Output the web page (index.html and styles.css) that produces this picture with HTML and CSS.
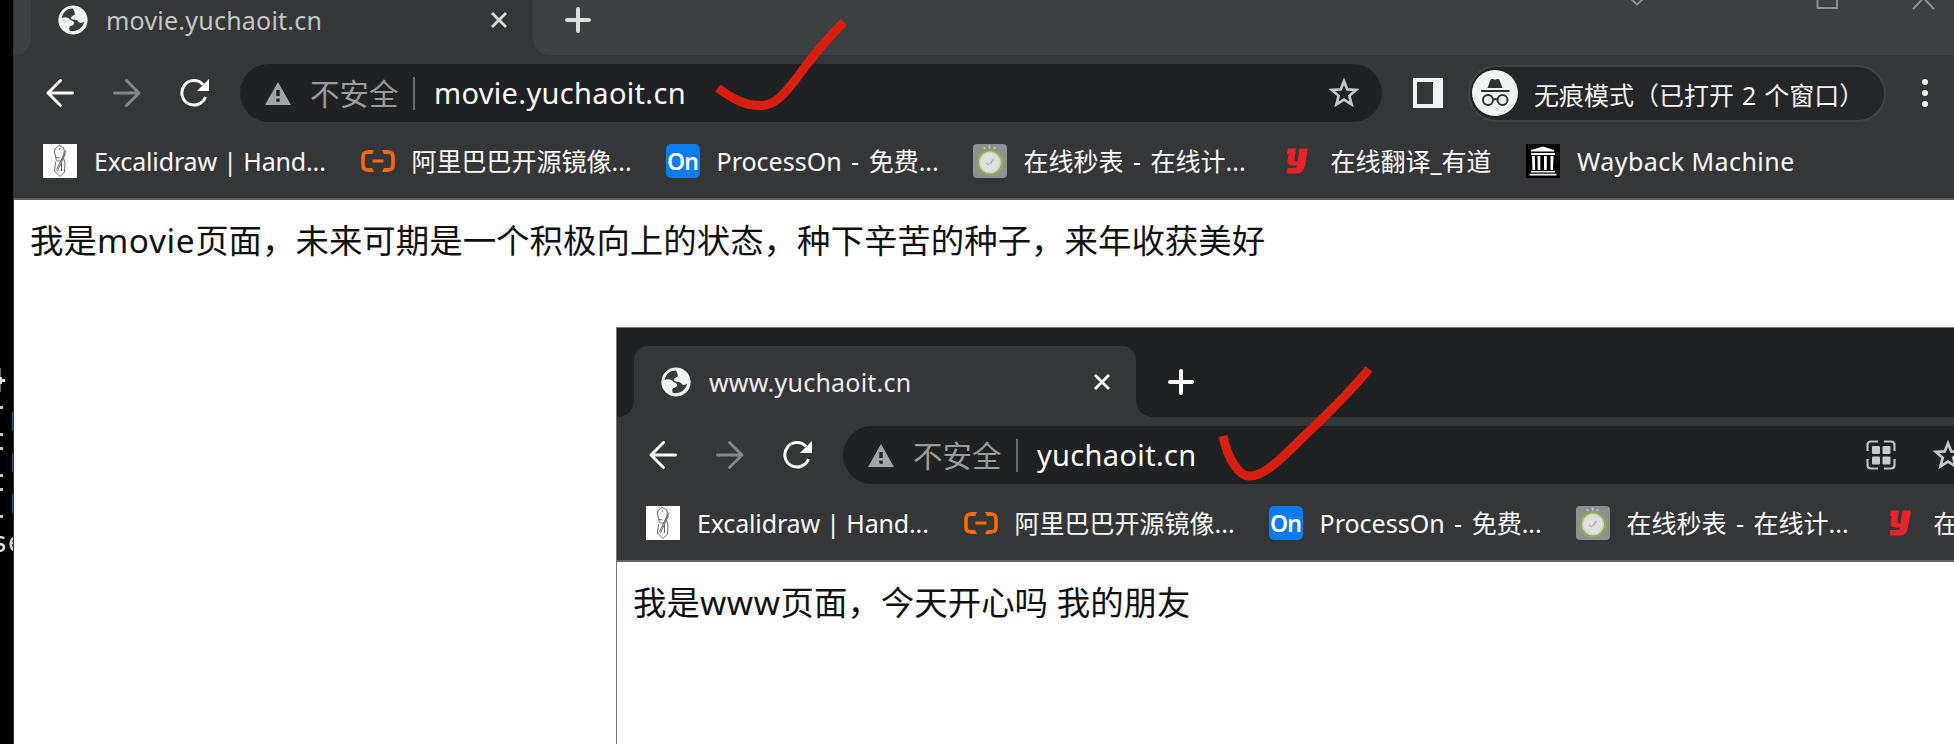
FILE: index.html
```html
<!DOCTYPE html>
<html lang="zh-CN">
<head>
<meta charset="utf-8">
<title>yuchaoit.cn</title>
<link rel="stylesheet" href="styles.css">
</head>
<body>
<svg class="defs" aria-hidden="true">
  <symbol id="globe" viewBox="0 0 30 30"><circle cx="15" cy="15" r="14.6" fill="#f1f3f4"/><path d="M15 3.500C9 3 4.500 7.500 3.800 13c2.200-1 5-.8 7.200 0.500 1.200 1.800 3.800 2.200 5 3.500 0.800 2-1 3.500-3.500 4-1.500 0.600-1.500 3-0.800 4.800 6 1.500 13-2 14.500-9-3 2-5.500 1-6.500-1-1.500-1.500-5-0.500-6.500-2-0.500-2 0.800-3.200 2.800-3.600 1.600-1 0.500-3.500-1-6.700z" fill="#3a3b3d"/></symbol>
  <symbol id="close" viewBox="0 0 18 18"><path d="M2 2l14 14M16 2L2 16" stroke="currentColor" stroke-width="2.800" fill="none"/></symbol>
  <symbol id="plus" viewBox="0 0 26 26"><path d="M13 2v22M2 13h22" stroke="currentColor" stroke-width="4" stroke-linecap="round"/></symbol>
  <symbol id="arrow" viewBox="0 0 28 28"><path d="M26.500 14H2M14.500 1.500L2 14l12.500 12.500" stroke="currentColor" stroke-width="2.900" stroke-linecap="round" stroke-linejoin="round" fill="none"/></symbol>
  <symbol id="reload" viewBox="0 0 29 28"><path d="M25.500 18A12.200 12.200 0 1 1 23 5.500" stroke="#fff" stroke-width="3" fill="none"/><path d="M29 0v12H17z" fill="#fff"/></symbol>
  <symbol id="warn" viewBox="0 0 26 23"><path d="M13 0l13 23H0z" fill="#a2a5a8"/><path d="M13 8v6M13 16.500v3.200" stroke="#202124" stroke-width="3.400"/></symbol>
  <symbol id="star" viewBox="0 0 30 30"><path d="M15 3.200l3.300 8.200 8.800.6-6.800 5.700 2.200 8.600-7.500-4.800-7.500 4.800 2.200-8.600L2.900 12l8.800-.6z" stroke="#c6c8ca" stroke-width="2.700" fill="none"/></symbol>
  <symbol id="qr" viewBox="0 0 30 30"><path d="M1.500 11V5q0-3.500 3.500-3.500h7M18 1.500h7q3.500 0 3.500 3.500v6M28.500 19v6q0 3.500-3.500 3.500h-7M12 28.500H5q-3.500 0-3.500-3.500v-6" fill="none" stroke="#bfc1c3" stroke-width="2.200"/><g fill="#c9cacc"><rect x="6" y="6" width="8" height="8" rx="1"/><rect x="16.500" y="6" width="8" height="8" rx="1"/><rect x="6" y="16.500" width="8" height="8" rx="1"/><rect x="16.500" y="16.500" width="8" height="8" rx="1"/></g></symbol>
  <symbol id="pen" viewBox="0 0 34 34"><path d="M0 0h34v34H0z" fill="#fff"/><path d="M16 1.500l-4 3.500-.5 3 1.800 8 1 1h3.500l3-6.500.5-4.500-1-2.500zM13 13.500l3.500.5M23 6.500l-9.500 19M22.500 9.500l-8 17.500M18.500 19v8M12.500 18l-1 9 5.500 5.500 4.500-4.500.5-9-1.500-5" fill="none" stroke="#666" stroke-width="1"/><circle cx="16.500" cy="5" r=".8" fill="#555"/></symbol>
  <symbol id="ali" viewBox="0 0 34 22"><path d="M11.500 2H7Q2 2 2 7v8q0 5 5 5h4.500M22.500 2H27q5 0 5 5v8q0 5-5 5h-4.500" fill="none" stroke="#ff6a00" stroke-width="3.600"/><path d="M7 0h6l-2.500 4H6zM27 0h-6l2.500 4H28zM7 22h6l-2.500-4H6zM27 22h-6l2.500-4H28zM11.500 9.500h11v3h-11z" fill="#ff6a00"/></symbol>
  <symbol id="watch" viewBox="0 0 34 34"><rect width="34" height="34" rx="4" fill="#8e918f"/><path d="M11 3l1 2M16.500 1.500v3M22 3l-1 2" stroke="#c5c9c5" stroke-width="1.600"/><circle cx="17" cy="18.500" r="12" fill="#cfd1cf" stroke="#93ad4c" stroke-width="2.200"/><circle cx="17" cy="18.500" r="9.500" fill="#e0e0e0"/><path d="M17 20l3.500-5M16 21l-3-2" stroke="#b5b5b5" stroke-width="1.500"/></symbol>
  <symbol id="youdao" viewBox="0 0 34 34"><path d="M8 4.500h8l-1.500 11q-.2 2 1.500 2h1.500l2-13H28l-3 17q-1.500 8-8.500 8H6.500l1-5.500h7q2.500 0 3-2.500h-5q-5.500 0-5-5L8.500 10H7z" fill="#e8232a"/></symbol>
  <symbol id="wayback" viewBox="0 0 34 34"><path d="M0 0h34v34H0z" fill="#000"/><path d="M17 2.500L28 6v1.500H5V6zM5 9h24v2H5zM5 27h24v1.500H5zM3.500 29.800h27V31.500h-27zM6 12h2.800l.4 14H6.500zM11.500 12h2.800v14h-2.600zM18 12h2.800v14H18zM24.500 12h3l-.5 14h-2.500z" fill="#fff"/></symbol>
  <symbol id="spy" viewBox="0 0 46 46"><circle cx="23" cy="23" r="23" fill="#f1f3f4"/><path d="M15.500 18l3-8q.5-1.500 2-1l2.500.8 2.500-.8q1.500-.5 2 1l3 8zM9 20h28.500v1.900H9z" fill="#303134"/><g fill="none" stroke="#303134" stroke-width="2"><circle cx="16" cy="30" r="5"/><circle cx="30.500" cy="30" r="5"/><path d="M21 30q2.200-2 4.500 0"/></g></symbol>
</svg>

<div class="terminal"><i class="gold"></i><b class="cross"></b>
  <div class="dashes"><i></i><i></i><i></i><i></i><i></i><i></i></div>
  <div class="marks"><i></i><i></i><i></i></div>
  <span class="term-text">se</span>
</div>

<section class="window back">
  <header class="titlebar">
    <div class="tab"><svg class="globe"><use href="#globe"/></svg><span class="tab-title">movie.yuchaoit.cn</span><svg class="close"><use href="#close"/></svg></div>
    <svg class="plus"><use href="#plus"/></svg>
    <svg class="caption" viewBox="0 0 300 10"><path d="M-6 -2l7 6.500 7-6.500M181.500 -8h19.500V8h-19.500zM277 9l10.500-11 10.500 11" fill="none" stroke="#8f9293" stroke-width="1.900"/></svg>
  </header>
  <nav class="toolbar">
    <svg class="nav"><use href="#arrow"/></svg><svg class="nav next"><use href="#arrow"/></svg><svg class="reload"><use href="#reload"/></svg>
    <div class="omnibox"><svg class="warn"><use href="#warn"/></svg><span class="unsafe">不安全</span><i class="sep"></i><span class="url">movie.yuchaoit.cn</span><svg class="star"><use href="#star"/></svg></div>
    <i class="panel"></i>
    <div class="incognito"><svg class="spy"><use href="#spy"/></svg><span>无痕模式（已打开 2 个窗口）</span></div>
    <div class="menu"><i></i><i></i><i></i></div>
  </nav>
  <div class="bookmarks">
    <a><svg class="fav"><use href="#pen"/></svg><span class="latin">Excalidraw | Hand...</span></a>
    <a><svg class="fav ali"><use href="#ali"/></svg><span>阿里巴巴开源镜像...</span></a>
    <a><b class="on">On</b><span class="spaced">ProcessOn - 免费...</span></a>
    <a><svg class="fav"><use href="#watch"/></svg><span class="spaced">在线秒表 - 在线计...</span></a>
    <a><svg class="fav"><use href="#youdao"/></svg><span>在线翻译_有道</span></a>
    <a><svg class="fav"><use href="#wayback"/></svg><span class="wb">Wayback Machine</span></a>
  </div>
  <main class="page">我是<span class="word">movie</span>页面，未来可期是一个积极向上的状态，种下辛苦的种子，来年收获美好</main>
</section>

<section class="window front">
  <header class="titlebar">
    <div class="tab"><svg class="globe"><use href="#globe"/></svg><span class="tab-title">www.yuchaoit.cn</span><svg class="close"><use href="#close"/></svg></div>
    <svg class="plus"><use href="#plus"/></svg>
  </header>
  <nav class="toolbar">
    <svg class="nav"><use href="#arrow"/></svg><svg class="nav next"><use href="#arrow"/></svg><svg class="reload"><use href="#reload"/></svg>
    <div class="omnibox"><svg class="warn"><use href="#warn"/></svg><span class="unsafe">不安全</span><i class="sep"></i><span class="url">yuchaoit.cn</span><svg class="qr"><use href="#qr"/></svg><svg class="star"><use href="#star"/></svg></div>
  </nav>
  <div class="bookmarks">
    <a><svg class="fav"><use href="#pen"/></svg><span class="latin">Excalidraw | Hand...</span></a>
    <a><svg class="fav ali"><use href="#ali"/></svg><span>阿里巴巴开源镜像...</span></a>
    <a><b class="on">On</b><span class="spaced">ProcessOn - 免费...</span></a>
    <a><svg class="fav"><use href="#watch"/></svg><span class="spaced">在线秒表 - 在线计...</span></a>
    <a><svg class="fav"><use href="#youdao"/></svg><span>在</span></a>
  </div>
  <main class="page">我是<span class="word">www</span>页面，今天开心吗 我的朋友</main>
</section>

<svg class="ticks" viewBox="0 0 1954 744"><path d="M718 88C734 100 746 105.500 760 105.500C774 105.500 782 97 796 79C808 62 822 44 844 22" /><path d="M1223 436C1228 461 1240 476 1249 476C1262 477 1280 460 1295 445C1320 420 1340 404 1369 369"/></svg>
</body>
</html>
```
FILE: styles.css
```css
* { box-sizing: border-box; }
body {
  margin: 0; width: 1954px; height: 744px; position: relative; overflow: hidden;
  background: #000;
  font-family: "Noto Sans", "Noto Sans CJK SC", sans-serif;
}
svg, i, b { display: block; flex: none; }
.defs { position: absolute; width: 0; height: 0; }

.terminal { position: absolute; left: 0; top: 0; width: 14px; height: 744px; overflow: hidden; border-right: 1px solid #282828; }
.gold { position: absolute; top: 368px; width: 1px; height: 24px; background: #876a32; }
.cross { position: absolute; top: 379px; width: 5px; height: 3px; background: #ddd; }
.cross::after { content: ""; position: absolute; left: 0; top: -2px; width: 2px; height: 7px; background: #ddd; }
.dashes { padding-top: 406px; display: grid; grid-template-rows: 27px 14px 27px 14px 27px 3px; }
.dashes i { width: 3px; height: 3px; background: #c8c8c8; }
.marks { position: absolute; left: 12px; top: 412px; display: grid; gap: 22px; }
.marks i { width: 2px; height: 19px; background: #305b84; }
.term-text { position: absolute; left: -9px; top: 525px; font: 28px/36px "DejaVu Sans Mono", monospace; color: #ddd; }

.window { position: absolute; background: #fff; border: 1px solid #777; border-width: 1px 0 0 1px; }
.back { left: 13px; top: -35px; width: 1941px; height: 779px; border-color: #303132; }
.front { left: 616px; top: 327px; width: 1338px; height: 417px; overflow: hidden; }

.titlebar { height: 89px; display: flex; align-items: flex-end; padding-left: 17px; background: #202122; color: #fff; }
.back .titlebar { background: #3c4041; color: #dcdddd; }
.tab { position: relative; width: 502px; height: 71px; border-radius: 14px 14px 0 0; background: #353637; display: flex; align-items: center; padding: 0 25px 0 27px; }
.tab::before, .tab::after { content: ""; position: absolute; bottom: 0; width: 16px; height: 16px; }
.tab::before { left: -16px; background: radial-gradient(circle at 0 0, transparent 15.5px, #353637 16px); }
.tab::after { right: -16px; background: radial-gradient(circle at 100% 0, transparent 15.5px, #353637 16px); }
.globe { width: 30px; height: 30px; }
.tab-title { margin-left: 18px; padding-top: 1px; font-size: 25px; letter-spacing: .22px; white-space: nowrap; color: #eee; }
.back .tab-title { color: #c4c6c7; }
.close { width: 18px; height: 18px; margin-left: auto; }
.plus { width: 26px; height: 26px; margin: 0 0 22px 32px; }
.caption { width: 300px; height: 10px; margin: 0 18px 45px auto; overflow: visible; }

.toolbar { height: 76px; padding-left: 32px; background: #353637; display: flex; align-items: center; }
.nav { width: 28px; height: 28px; margin-right: 39px; color: #fff; }
.next { transform: scaleX(-1); color: #858687; }
.reload { width: 29px; height: 28px; }
.omnibox { margin-left: 31px; width: 1142px; height: 58px; border-radius: 29px; background: #202122; flex: none; display: flex; align-items: center; padding: 0 23px 0 25px; white-space: nowrap; }
.front .omnibox { width: 1165px; padding-right: 45px; }
.warn { width: 26px; height: 23px; }
.unsafe { margin-left: 19px; padding-bottom: 2px; width: 88px; font-size: 29.500px; color: #999da0; }
.sep { width: 2px; height: 33px; margin: 0 19px 0 15px; background: #696b6d; }
.url { padding-bottom: 2px; font-size: 29px; letter-spacing: .33px; color: #fff; }
.star { width: 30px; height: 30px; margin-left: auto; }
.qr { width: 30px; height: 30px; margin-left: auto; }
.qr + .star { margin-left: 37px; }
.panel { width: 30px; height: 30px; margin-left: 31px; border: 4px solid #f1f3f4; border-right-width: 10px; }
.incognito { margin-left: 25px; width: 418px; height: 57px; border-radius: 29px; border: 2px solid #404244; background: #252628; display: flex; align-items: center; padding-left: 2px; font-size: 25px; word-spacing: 1.500px; color: #f3f3f3; white-space: nowrap; }
.incognito span { padding-top: 2px; }
.spy { width: 46px; height: 46px; margin-right: 16px; }
.menu { margin-left: 36px; display: grid; gap: 5px; }
.menu i { width: 6px; height: 6px; border-radius: 3px; background: #f1f3f4; }

.bookmarks { height: 69px; padding: 0 0 8px 29px; background: #353637; border-bottom: 2px solid #626365; display: grid; grid-template-columns: 317.500px 305px 307px 307px 246.500px auto; align-items: center; }
.bookmarks a { display: flex; align-items: center; color: #fafafa; font-size: 25px; white-space: nowrap; line-height: 36px; }
.bookmarks span { margin-left: 17px; padding-top: 1px; }
.bookmarks .latin { letter-spacing: -.15px; }
.bookmarks .spaced { word-spacing: 3px; }
.bookmarks .wb { letter-spacing: .45px; }
.fav { width: 34px; height: 34px; }
.ali { height: 22px; }
.on { width: 34px; height: 34px; border-radius: 5px; background: #087cf0; font-size: 23px; font-weight: 600; line-height: 34px; text-align: center; letter-spacing: -1px; }
.page { padding: 15px 0 0 16px; font-size: 33.450px; line-height: 50px; color: #111; white-space: nowrap; }
.word { letter-spacing: .6px; }
.ticks { position: absolute; left: 0; top: 0; width: 1954px; height: 744px; fill: none; stroke: #d81e10; stroke-width: 9px; pointer-events: none; }
```
